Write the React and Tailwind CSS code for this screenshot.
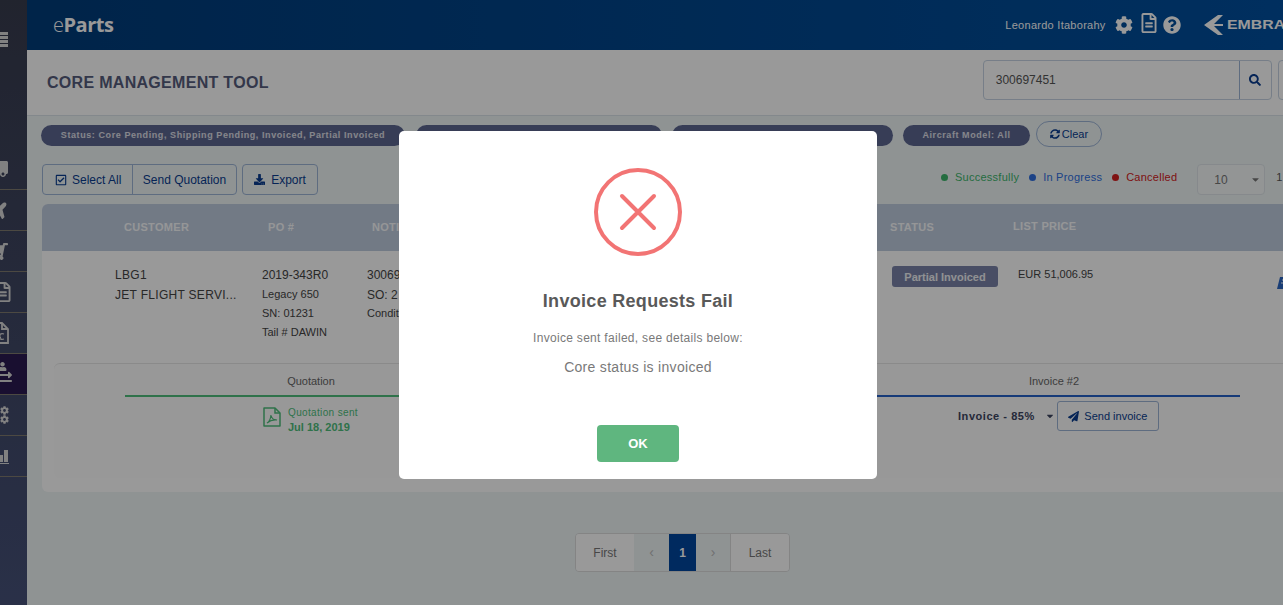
import React from 'react';
import {
  FaCog, FaDownload, FaExchangeAlt, FaPaperPlane, FaPlane,
  FaQuestionCircle, FaRegCheckSquare, FaRegFileAlt, FaSearch, FaShoppingCart,
  FaSyncAlt, FaTruck, FaUser, FaCaretDown,
} from 'react-icons/fa';

const EuroFile = () => (
  <svg width="17" height="22" viewBox="0 0 17 22" fill="none" stroke="currentColor" strokeWidth="1.800">
    <path d="M1 1h9l6 6v14H1z" />
    <path d="M10 1v6h6" />
    <path d="M12 12c-3-1-5 .5-5 2.500S9 18 12 17M4.500 14h4.500M4.500 15.500h4.500" strokeWidth="1.200" />
  </svg>
);

const PdfIcon = () => (
  <svg width="18" height="20" viewBox="0 0 18 20" fill="none" stroke="currentColor" strokeWidth="1.500" className="shrink-0">
    <path d="M1 1h11l5 5v13H1z" strokeLinejoin="round" />
    <path d="M12 1v5h5" />
    <path d="M4 16c2-1 3.500-4 4-8 .5 3 2.500 5 6 5-3-.5-7 .5-10 3z" strokeWidth="1.200" />
  </svg>
);

const EditIcon = () => (
  <svg width="16" height="12" viewBox="0 0 16 12" className="mt-[12px] shrink-0 text-[#2a66c4]" fill="currentColor">
    <path d="M3 0h12l-3 12H0z" />
    <path d="M5 3h6M4 6h6" stroke="#fff" strokeWidth="1" />
  </svg>
);

const BarsIcon = () => (
  <svg width="9" height="15" viewBox="0 0 9 15" fill="currentColor">
    <rect x="0" y="6" width="3" height="7" />
    <rect x="4" y="1" width="4" height="12" />
    <rect x="0" y="14" width="9" height="1" />
  </svg>
);

const SideItem = ({ active, children }) => (
  <div className={`h-[41px] flex items-center overflow-hidden border-b border-[#7f7a6e] ${active ? 'bg-[#2b1a50]' : ''}`}>
    {children}
  </div>
);

const Sidebar = () => (
  <aside className="w-[27px] shrink-0 h-[605px] overflow-hidden bg-gradient-to-b from-[#383c4e] to-[#465179] text-[#d8d8d8]">
    <div className="h-[149px] pt-[32px]">
      <svg width="8" height="15" viewBox="0 0 8 15" fill="currentColor">
        <rect y="0" width="8" height="3" />
        <rect y="4" width="8" height="3" />
        <rect y="8" width="8" height="3" />
        <rect y="12" width="8" height="3" />
      </svg>
    </div>
    <SideItem><FaTruck size={20} className="-ml-[12px] -scale-x-100" /></SideItem>
    <SideItem><FaPlane size={20} className="-ml-[11px] -rotate-45" /></SideItem>
    <SideItem><FaShoppingCart size={19} className="-ml-[11px] -scale-x-100" /></SideItem>
    <SideItem><span className="-ml-[7px]"><FaRegFileAlt size={20} /></span></SideItem>
    <SideItem><span className="-ml-[8px]"><EuroFile /></span></SideItem>
    <SideItem active>
      <div className="-ml-[4px] flex flex-col items-center">
        <FaUser size={9} className="mb-[-1px] -ml-[4px]" />
        <FaExchangeAlt size={16} />
      </div>
    </SideItem>
    <SideItem>
      <div className="flex flex-col">
        <FaCog size={9} />
        <FaCog size={9} />
      </div>
    </SideItem>
    <SideItem><BarsIcon /></SideItem>
  </aside>
);

const TopBar = () => (
  <header className="h-[50px] shrink-0 flex items-center bg-gradient-to-r from-[#003c7a] to-[#0050a0] text-white pl-[26px]">
    <div className="font-['Open_Sans',sans-serif] text-[20px] leading-none tracking-[-0.5px]">
      <span className="font-light">e</span><span className="font-bold">Parts</span>
    </div>
    <span className="ml-[892px] text-[11px] tracking-[0.27px]">Leonardo Itaborahy</span>
    <FaCog size={18} className="ml-[9px]" />
    <FaRegFileAlt size={20} className="ml-[6px] -mt-[4px]" />
    <FaQuestionCircle size={18} className="ml-[4px]" />
    <svg width="19" height="20" viewBox="0 0 19 20" className="ml-[23px] shrink-0" fill="currentColor">
      <path d="M0 10 L14 0 L19 0 L10 9 H19 V11 H10 L19 20 L14 20 Z" />
    </svg>
    <span className="ml-[4px] text-[13px] font-bold scale-x-[1.22] origin-left">EMBRAER</span>
  </header>
);

const TitleBar = () => (
  <div className="h-[66px] shrink-0 bg-white border-b border-[#dbe3ea] flex items-start pl-[20px]">
    <h1 className="mt-[23px] text-[16px] leading-[20px] font-bold text-[#555c7c] tracking-[0.3px]">CORE MANAGEMENT TOOL</h1>
    <div className="ml-[714px] mt-[10px] flex h-[40px] w-[289px] shrink-0 border border-[#c6d3e3] rounded-[4px] bg-white">
      <div className="flex-1 pl-[12px] pt-[11px] text-[12px] leading-[16px] text-[#555]">300697451</div>
      <div className="w-[32px] border-l border-[#9db4d6] flex items-center justify-center text-[#0a3d8f]">
        <FaSearch size={12} />
      </div>
    </div>
    <div className="ml-[6px] mt-[10px] h-[40px] w-[40px] shrink-0 border border-[#c6d3e3] rounded-[4px]" />
  </div>
);

const Chip = ({ width, children }) => (
  <div className={`${width} h-[21px] shrink-0 rounded-full bg-[#5d6690] text-white/80 text-[9px] font-bold tracking-[0.58px] flex items-center justify-center`}>
    {children}
  </div>
);

const Filters = () => (
  <div className="h-[32px] pt-[9px] pl-[14px] flex items-start">
    <Chip width="w-[364px]">Status: Core Pending, Shipping Pending, Invoiced, Partial Invoiced</Chip>
    <Chip width="w-[246px] ml-[11px]" />
    <Chip width="w-[221px] ml-[10px]" />
    <Chip width="w-[127px] ml-[10px]">Aircraft Model: All</Chip>
    <button className="ml-[6px] -mt-[4px] h-[26px] w-[66px] rounded-full border border-[#9db4d6] text-[#0a3d8f] text-[11px] flex items-center justify-center gap-[2px]">
      <FaSyncAlt size={10} />Clear
    </button>
  </div>
);

const Legend = ({ dot, text, label, className }) => (
  <span className={`flex items-center text-[11px] tracking-[0.25px] ${text} ${className}`}>
    <span className={`w-[7px] h-[7px] rounded-full mr-[7px] ${dot}`} />
    <span>{label}</span>
  </span>
);

const Toolbar = () => (
  <div className="h-[56px] pt-[16px] pl-[15px] flex items-start text-[12px] text-[#0a3d8f]">
    <div className="flex h-[31px] border border-[#9db4d6] rounded-[4px]">
      <div className="w-[90px] flex items-center pl-[12px] gap-[5px] border-r border-[#9db4d6]">
        <FaRegCheckSquare size={12} />Select All
      </div>
      <div className="w-[103px] flex items-center justify-center">Send Quotation</div>
    </div>
    <div className="ml-[5px] flex h-[31px] w-[76px] border border-[#9db4d6] rounded-[4px] items-center justify-center gap-[6px]">
      <FaDownload size={11} />Export
    </div>
    <Legend className="ml-[623px] mt-[5px]" dot="bg-[#3db66b]" text="text-[#3db66b]" label="Successfully" />
    <Legend className="ml-[10px] mt-[5px]" dot="bg-[#2f6fe0]" text="text-[#2f6fe0]" label="In Progress" />
    <Legend className="ml-[10px] mt-[5px]" dot="bg-[#d42020]" text="text-[#d42020]" label="Cancelled" />
    <div className="ml-[20px] h-[31px] w-[68px] border border-[#dfe5ea] rounded-[4px] bg-white/40 flex items-center pl-[16px] pr-[3px] justify-between text-[#777]">
      <span>10</span><FaCaretDown size={11} />
    </div>
    <span className="ml-[11px] mt-[5px] text-[11px] text-[#555]">1</span>
  </div>
);

const TableHead = () => (
  <div className="h-[47px] flex items-center rounded-tl-[6px] bg-[#becbde] pl-[82px] text-[11px] font-bold text-white/90 tracking-[0.3px]">
    <span className="w-[144px]">CUSTOMER</span>
    <span className="w-[104px]">PO #</span>
    <span className="w-[518px]">NOTIFICATION</span>
    <span className="w-[123px]">STATUS</span>
    <span className="-mt-[2px]">LIST PRICE</span>
  </div>
);

const TableRow = () => (
  <div className="h-[112px] flex pl-[73px] pt-[14px] text-[#444] text-[12px] leading-[20px]">
    <div className="w-[147px] tracking-[0.3px]">
      <div>LBG1</div>
      <div>JET FLIGHT SERVI...</div>
    </div>
    <div className="w-[105px] text-[11px] leading-[19px]">
      <div className="text-[12px] leading-[20px]">2019-343R0</div>
      <div>Legacy 650</div>
      <div>SN: 01231</div>
      <div>Tail # DAWIN</div>
    </div>
    <div className="w-[525px]">
      <div>300697451</div>
      <div>SO: 2</div>
      <div className="text-[11px] -mt-[2px]">Condition</div>
    </div>
    <div className="w-[126px] pt-[1px]">
      <div className="w-[106px] h-[21px] rounded-[3px] bg-[#7a83a8] text-white/90 text-[11px] font-semibold flex items-center justify-center">Partial Invoiced</div>
    </div>
    <div className="w-[259px] text-[11px] leading-[18px]">EUR 51,006.95</div>
    <EditIcon />
  </div>
);

const Stages = () => (
  <div className="ml-[12px] h-[115px] rounded-[6px] border-t border-[#e6e6e6] bg-[#fdfdfd] pl-[71px] text-[11px]">
    <div className="grid grid-cols-[372px_371px_372px] w-[1115px]">
      <div>
        <div className="h-[33px] pt-[3px] flex items-center justify-center text-[#666] border-b-2 border-[#4fbf7c]">Quotation</div>
        <div className="flex pl-[138px] pt-[10px] text-[#4fbf7c]">
          <PdfIcon />
          <div className="ml-[7px]">
            <div className="text-[10px] leading-[12px] tracking-[0.35px]">Quotation sent</div>
            <div className="text-[11px] leading-[17px] font-semibold">Jul 18, 2019</div>
          </div>
        </div>
      </div>
      <div className="h-[33px] border-b-2 border-[#2561c8]" />
      <div>
        <div className="h-[33px] pt-[3px] flex items-center justify-center text-[#666] border-b-2 border-[#2561c8]">Invoice #2</div>
        <div className="flex items-center pl-[90px] pt-[4px]">
          <span className="font-bold text-[#3c4560] tracking-[0.55px]">Invoice - 85%</span>
          <FaCaretDown size={10} className="ml-[10px] text-[#3c4560]" />
          <div className="ml-[2px] h-[30px] w-[102px] border border-[#9db4d6] rounded-[3px] flex items-center justify-center gap-[5px] text-[#0a3d8f]">
            <FaPaperPlane size={11} />Send invoice
          </div>
        </div>
      </div>
    </div>
  </div>
);

const Pagination = () => (
  <div className="mt-[41px] pl-px flex justify-center text-[12px] text-[#777]">
    <div className="flex h-[39px] border border-[#dcdcdc] rounded-[4px] overflow-hidden">
      <div className="w-[58px] bg-white flex items-center justify-center">First</div>
      <div className="w-[35px] flex items-center justify-center text-[#bbb] text-[14px]">‹</div>
      <div className="w-[27px] bg-[#00469f] text-white font-bold flex items-center justify-center">1</div>
      <div className="w-[34px] flex items-center justify-center text-[#bbb] text-[14px]">›</div>
      <div className="w-[59px] bg-white flex items-center justify-center border-l border-[#dcdcdc]">Last</div>
    </div>
  </div>
);

const ErrorModal = () => (
  <div className="fixed inset-0 bg-black/40 flex justify-center items-start pt-[131px] pr-[7px]">
    <div className="w-[478px] h-[348px] bg-white rounded-[5px] flex flex-col items-center pt-[37px]">
      <svg width="88" height="88" viewBox="0 0 88 88" fill="none" stroke="#f27474" className="shrink-0">
        <circle cx="44" cy="44" r="42" strokeWidth="4" />
        <path d="M28 28 L60 60 M60 28 L28 60" strokeWidth="4" strokeLinecap="round" />
      </svg>
      <h2 className="mt-[33px] text-[18px] leading-[24px] font-bold text-[#595959] tracking-[0.3px]">Invoice Requests Fail</h2>
      <p className="mt-[17px] text-[12px] leading-[16px] text-[#797979] tracking-[0.3px]">Invoice sent failed, see details below:</p>
      <p className="mt-[11px] text-[14px] leading-[20px] text-[#797979] tracking-[0.3px]">Core status is invoiced</p>
      <button className="mt-[48px] w-[82px] h-[37px] rounded-[4px] bg-[#5fb67f] text-white text-[13px] font-bold">OK</button>
    </div>
  </div>
);

export default function App() {
  return (
    <div className="h-[605px] w-full overflow-hidden flex font-['Liberation_Sans',Arial,sans-serif] bg-[#eef5f6]">
      <Sidebar />
      <main className="w-[1310px] shrink-0 flex flex-col">
        <TopBar />
        <TitleBar />
        <Filters />
        <Toolbar />
        <section className="ml-[15px] h-[288px] shrink-0 bg-white rounded-[6px]">
          <TableHead />
          <TableRow />
          <Stages />
        </section>
        <Pagination />
      </main>
      <ErrorModal />
    </div>
  );
}
